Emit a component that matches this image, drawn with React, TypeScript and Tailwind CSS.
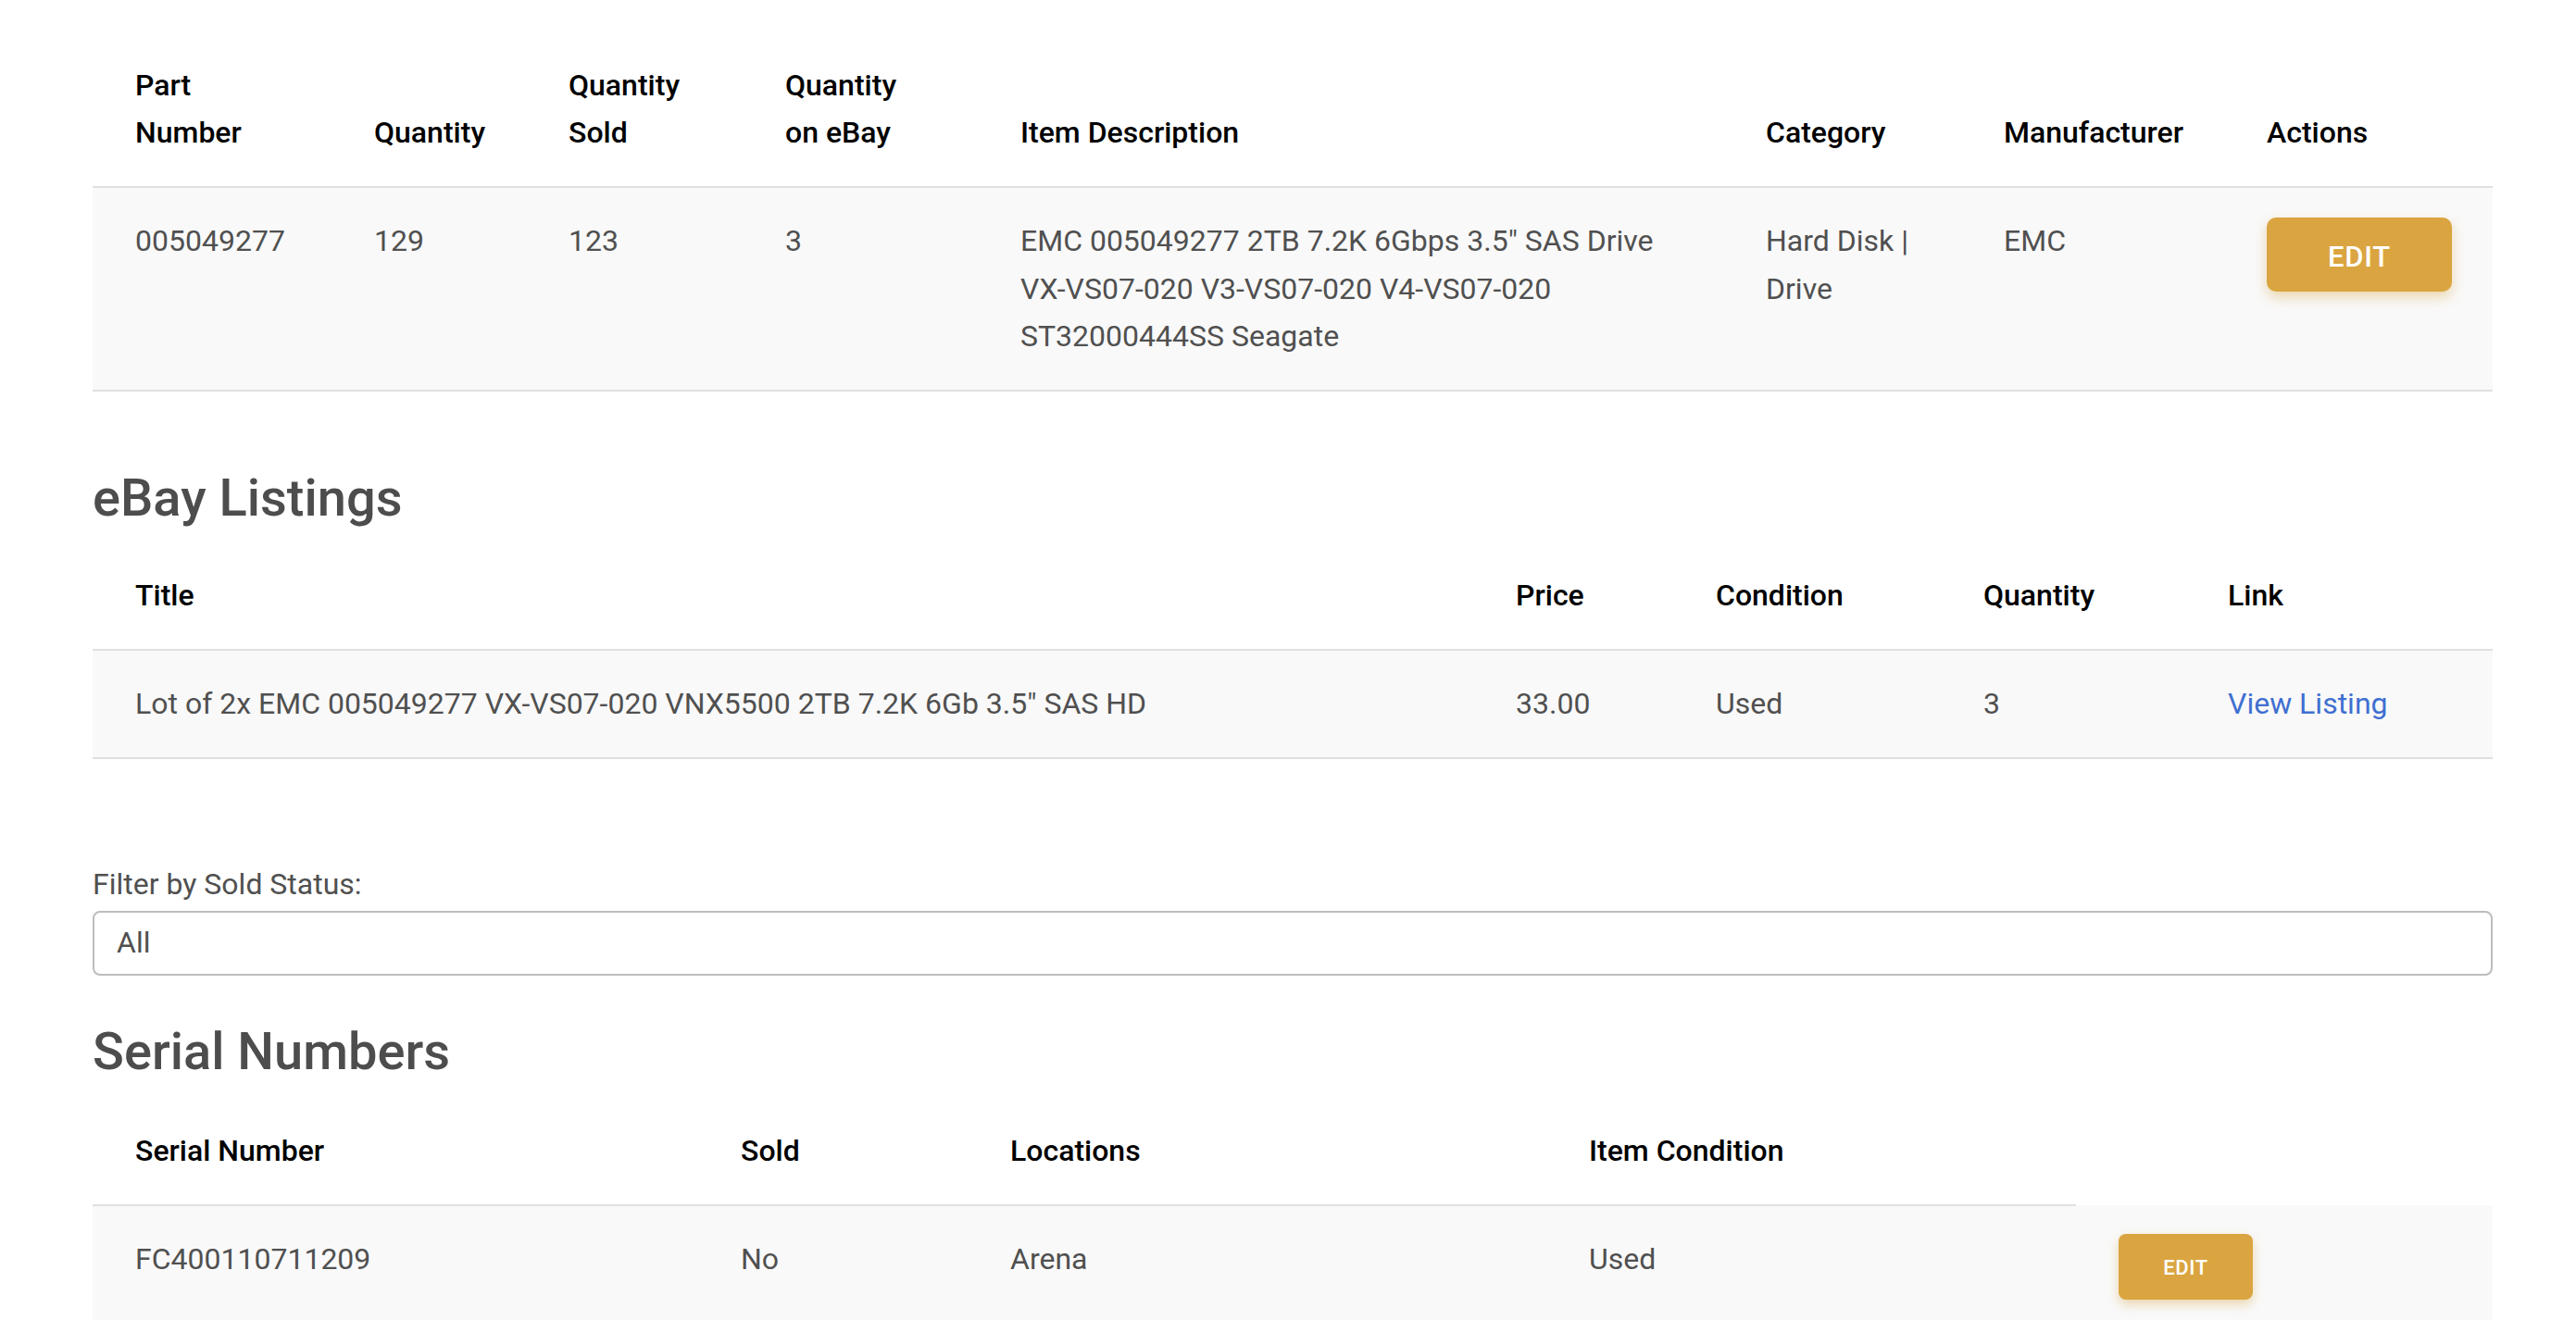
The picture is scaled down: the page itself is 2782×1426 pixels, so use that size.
const th = "px-[46px] py-[32px] text-left align-bottom font-medium text-black border-b-2 border-[#e0e0e0]";
const td = "px-[46px] py-[32px] align-top";

function EditButton({ small }: { small?: boolean }) {
  return (
    <button
      className={
        small
          ? "w-[145px] h-[71px] pt-[3px] rounded-[8px] bg-[#daa540] text-white text-[22px] font-medium tracking-wide shadow-[0_5px_12px_rgba(214,160,60,0.4)]"
          : "w-[200px] h-[80px] pt-[5px] rounded-[10px] bg-[#daa540] text-white text-[31px] font-medium tracking-wide shadow-[0_6px_14px_rgba(214,160,60,0.4)]"
      }
    >
      EDIT
    </button>
  );
}

export default function App() {
  return (
    <main className="min-h-screen bg-white pl-[100px] pr-[90px] pt-[35px] font-['Roboto',sans-serif] text-[32px] leading-[51.2px] text-[#505050]">
      {/* Part summary */}
      <table className="w-full table-fixed border-collapse">
        <colgroup>
          <col className="w-[258px]" />
          <col className="w-[210px]" />
          <col className="w-[234px]" />
          <col className="w-[254px]" />
          <col className="w-[805px]" />
          <col className="w-[257px]" />
          <col className="w-[284px]" />
          <col className="w-[290px]" />
        </colgroup>
        <thead>
          <tr>
            <th className={th}>Part Number</th>
            <th className={th}>Quantity</th>
            <th className={th}>Quantity Sold</th>
            <th className={th}>Quantity on eBay</th>
            <th className={th}>Item Description</th>
            <th className={th}>Category</th>
            <th className={th}>Manufacturer</th>
            <th className={th}>Actions</th>
          </tr>
        </thead>
        <tbody>
          <tr className="bg-[#f9f9f9] border-b-2 border-[#e0e0e0]">
            <td className={td}>005049277</td>
            <td className={td}>129</td>
            <td className={td}>123</td>
            <td className={td}>3</td>
            <td className={td}>
              EMC 005049277 2TB 7.2K 6Gbps 3.5" SAS Drive VX-VS07-020 V3-VS07-020 V4-VS07-020 ST32000444SS Seagate
            </td>
            <td className={td}>Hard Disk | Drive</td>
            <td className={td}>EMC</td>
            <td className={td}>
              <EditButton />
            </td>
          </tr>
        </tbody>
      </table>

      {/* eBay listings */}
      <h2 className="mt-[82px] mb-[15px] text-[56px] leading-[66px] font-medium text-[#4d4d4d]">eBay Listings</h2>
      <table className="w-full table-fixed border-collapse">
        <colgroup>
          <col className="w-[1491px]" />
          <col className="w-[216px]" />
          <col className="w-[289px]" />
          <col className="w-[264px]" />
          <col className="w-[332px]" />
        </colgroup>
        <thead>
          <tr>
            <th className={th}>Title</th>
            <th className={th}>Price</th>
            <th className={th}>Condition</th>
            <th className={th}>Quantity</th>
            <th className={th}>Link</th>
          </tr>
        </thead>
        <tbody>
          <tr className="bg-[#f9f9f9] border-b-2 border-[#e0e0e0]">
            <td className={td}>Lot of 2x EMC 005049277 VX-VS07-020 VNX5500 2TB 7.2K 6Gb 3.5" SAS HD</td>
            <td className={td}>33.00</td>
            <td className={td}>Used</td>
            <td className={td}>3</td>
            <td className={td}>
              <a href="#" className="text-[#3f6fd1]">
                View Listing
              </a>
            </td>
          </tr>
        </tbody>
      </table>

      {/* Filter */}
      <label className="block mt-[110px]">Filter by Sold Status:</label>
      <select className="mt-[2px] block w-full h-[70px] appearance-none rounded-[8px] border-2 border-[#bdbdbd] bg-white px-[24px] text-[32px] text-[#505050]">
        <option>All</option>
        <option>Sold</option>
        <option>Unsold</option>
      </select>

      {/* Serial numbers */}
      <h2 className="mt-[49px] mb-[17px] text-[56px] leading-[66px] font-medium text-[#4d4d4d]">Serial Numbers</h2>
      <table className="w-full table-fixed border-collapse">
        <colgroup>
          <col className="w-[654px]" />
          <col className="w-[291px]" />
          <col className="w-[625px]" />
          <col className="w-[572px]" />
          <col className="w-[450px]" />
        </colgroup>
        <thead>
          <tr>
            <th className={th}>Serial Number</th>
            <th className={th}>Sold</th>
            <th className={th}>Locations</th>
            <th className={th}>Item Condition</th>
          </tr>
        </thead>
        <tbody>
          <tr className="bg-[#f9f9f9] border-b-2 border-[#e0e0e0]">
            <td className={td}>FC400110711209</td>
            <td className={td}>No</td>
            <td className={td}>Arena</td>
            <td className={td}>Used</td>
            <td className="px-[46px] pt-[31px] pb-[32px] align-top">
              <EditButton small />
            </td>
          </tr>
        </tbody>
      </table>
    </main>
  );
}
